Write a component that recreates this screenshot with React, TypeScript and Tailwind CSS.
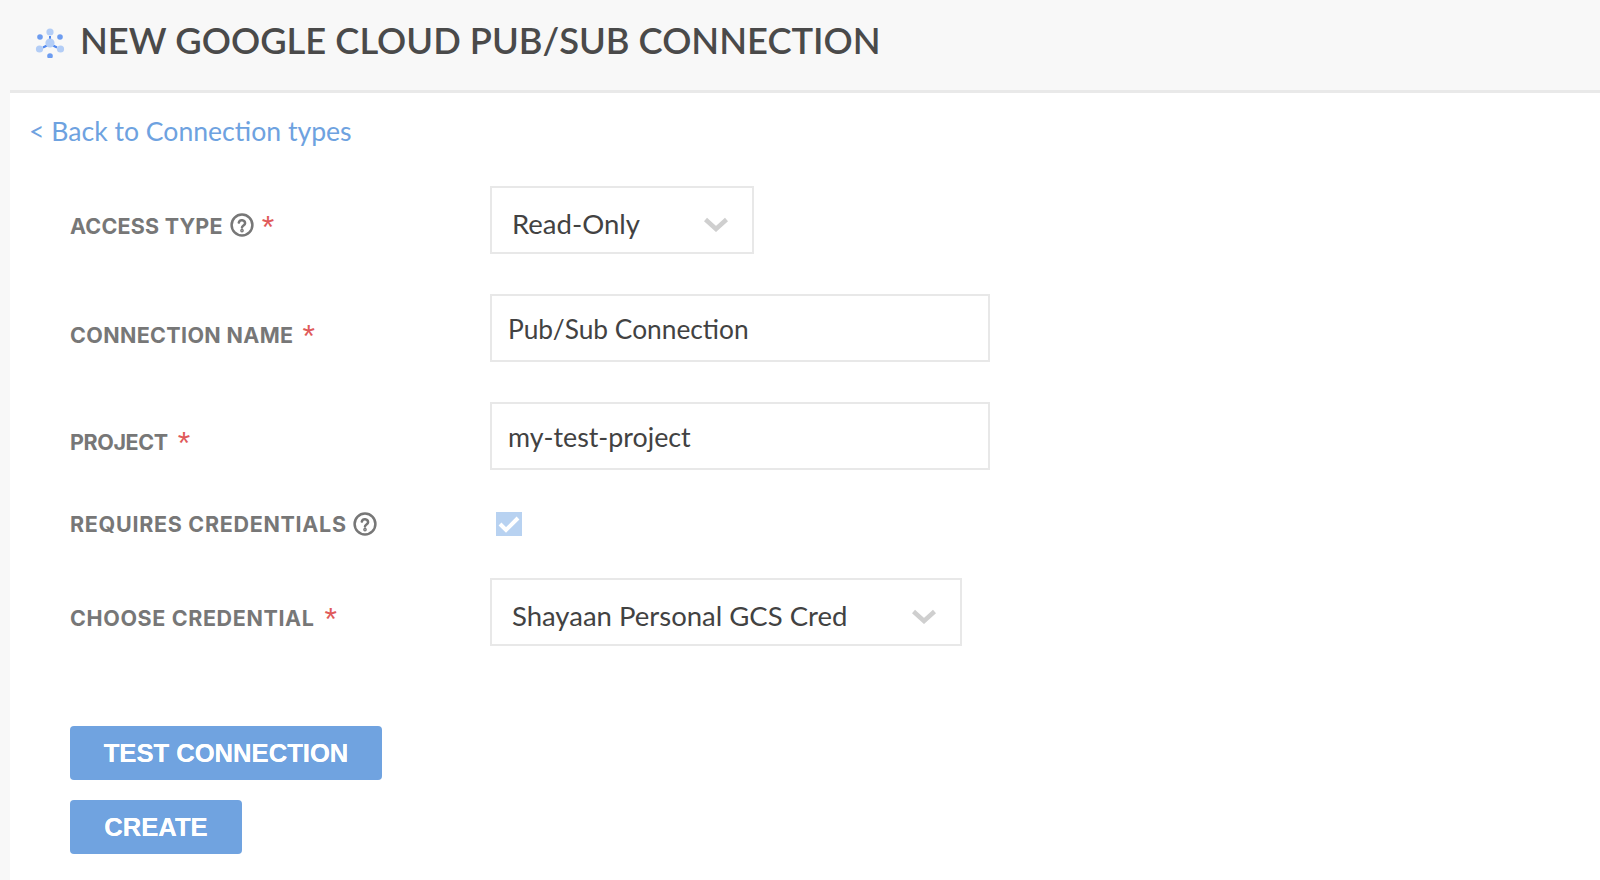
import React from "react";

const Help = () => (
  <svg width="24" height="24" viewBox="0 0 24 24" fill="none" stroke="#777777" strokeWidth="2.5" className="shrink-0 relative -top-[1px] -ml-[1px]">
    <circle cx="12" cy="12" r="10.4" />
    <path d="M8.8 9.6a3.2 3.2 0 0 1 6.3.6c0 2.2-3.1 2.3-3.1 4.3" strokeLinecap="round" />
    <circle cx="12" cy="17.6" r="0.6" fill="#777777" />
  </svg>
);

const Star = () => <span className="text-[#e05a5a] text-[32px] font-normal leading-none relative top-[1px] tracking-normal font-['Liberation_Sans',sans-serif]">*</span>;

const Chevron = () => (
  <svg width="24" height="15" viewBox="0 0 24 15" fill="none" stroke="#cfcfcf" strokeWidth="4.5" className="shrink-0">
    <path d="M1.5 2.5 L12 12 L22.5 2.5" />
  </svg>
);

const Logo = () => (
  <svg width="32" height="32" viewBox="0 0 32 32" className="shrink-0 relative top-[1px]">
    <rect x="15" y="10" width="2" height="4" fill="#4f86ee" />
    <path d="M9 21.5 L13 19.5 M23 21.5 L19 19.5" stroke="#4f86ee" strokeWidth="2" />
    <circle cx="16" cy="6" r="3.6" fill="#b3cdf6" />
    <circle cx="6" cy="11" r="2.8" fill="#6d9cf0" />
    <circle cx="26" cy="11" r="2.8" fill="#6d9cf0" />
    <circle cx="16" cy="17" r="4.6" fill="#b3cdf6" />
    <circle cx="5.5" cy="23" r="3.6" fill="#b3cdf6" />
    <circle cx="26.5" cy="23" r="3.6" fill="#b3cdf6" />
    <circle cx="16" cy="30" r="2.8" fill="#6d9cf0" />
  </svg>
);

const Label = ({ text, help, star, cls }: { text: string; help?: boolean; star?: boolean; cls: string }) => (
  <div className={`w-[420px] shrink-0 flex items-center font-bold text-[21.5px] text-[#777777] font-['Inter','Liberation_Sans',sans-serif] ${cls}`}>
    <span>{text}</span>
    {help && <Help />}
    {star && <Star />}
  </div>
);

export default function App() {
  return (
    <div className="h-[880px] overflow-hidden bg-white flex font-['Lato','Liberation_Sans',sans-serif]">
      <div className="w-[10px] bg-[#f8f8f8] shrink-0" />
      <div className="flex-1 flex flex-col">
        <div className="h-[93px] bg-[#f8f8f8] flex items-center pl-[24px] pb-[9px] gap-[14px] border-b-[3px] border-[#e9e9e9]">
          <Logo />
          <h1 className="text-[36.3px] font-semibold text-[#4a4a4a] whitespace-nowrap">NEW GOOGLE CLOUD PUB/SUB CONNECTION</h1>
        </div>
        <a className="ml-[19px] mt-[22px] text-[26.6px] leading-[32px] text-[#6ea2e0]">&lt; Back to Connection types</a>
        <div className="ml-[60px] mt-[39px] flex flex-col">
          <div className="flex items-center h-[68px]">
            <Label text="ACCESS TYPE" help star cls="gap-[8px] pt-[12px] tracking-[0.2px]" />
            <div className="w-[264px] h-[68px] border-2 border-[#e8e8e8] flex items-center justify-between pl-[20px] pr-[24px] pt-[8px] text-[27.5px] text-[#424242]">
              <span>Read-Only</span>
              <Chevron />
            </div>
          </div>
          <div className="flex items-center h-[68px] mt-[40px]">
            <Label text="CONNECTION NAME" star cls="gap-[9px] pt-[14px] tracking-[0.35px]" />
            <div className="w-[500px] h-[68px] border-2 border-[#e8e8e8] flex items-center pl-[16px] pt-[3px] text-[26.3px] text-[#424242]">Pub/Sub Connection</div>
          </div>
          <div className="flex items-center h-[68px] mt-[40px]">
            <Label text="PROJECT" star cls="gap-[10px] pt-[12px] tracking-[-0.4px]" />
            <div className="w-[500px] h-[68px] border-2 border-[#e8e8e8] flex items-center pl-[16px] pt-[3px] text-[26.8px] text-[#424242]">my-test-project</div>
          </div>
          <div className="flex items-center h-[30px] mt-[39px]">
            <Label text="REQUIRES CREDENTIALS" help cls="gap-[7px] pt-[1px] tracking-[0.7px]" />
            <div className="ml-[6px] w-[26px] h-[24px] bg-[#b8d2f1] flex items-center justify-center">
              <svg width="22" height="18" viewBox="0 0 22 18" fill="none" stroke="#ffffff" strokeWidth="4">
                <path d="M2 9 L8 15 L20 3" />
              </svg>
            </div>
          </div>
          <div className="flex items-center h-[68px] mt-[39px]">
            <Label text="CHOOSE CREDENTIAL" star cls="gap-[10px] pt-[12px] tracking-[0.62px]" />
            <div className="w-[472px] h-[68px] border-2 border-[#e8e8e8] flex items-center justify-between pl-[20px] pr-[24px] pt-[8px] text-[27.5px] text-[#424242]">
              <span>Shayaan Personal GCS Cred</span>
              <Chevron />
            </div>
          </div>
          <button className="mt-[80px] w-[312px] h-[54px] rounded-[4px] bg-[#70a3e0] text-white font-bold text-[25.6px] [text-shadow:0_0_0.6px_white] font-['Liberation_Sans',sans-serif] flex items-center justify-center">TEST CONNECTION</button>
          <button className="mt-[20px] w-[172px] h-[54px] rounded-[4px] bg-[#70a3e0] text-white font-bold text-[25.6px] [text-shadow:0_0_0.6px_white] font-['Liberation_Sans',sans-serif] flex items-center justify-center">CREATE</button>
        </div>
      </div>
    </div>
  );
}
